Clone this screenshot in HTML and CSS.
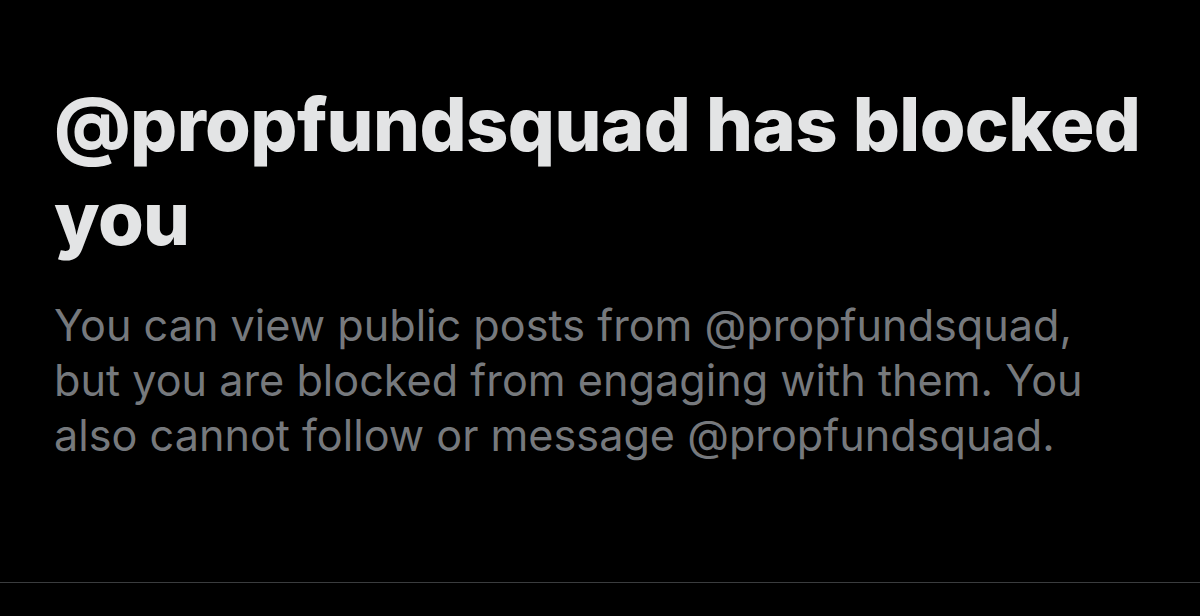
FILE: index.html
```html
<!DOCTYPE html>
<html lang="en">
<head>
    <meta charset="UTF-8">
    <meta name="viewport" content="width=device-width, initial-scale=1.0">
    <title>Blocked</title>
    <link rel="stylesheet" href="styles.css">
</head>
<body>
    <div class="blocked">
        <h1>@propfundsquad has blocked you</h1>
        <p>You can view public posts from @propfundsquad, but you are blocked from engaging with them. You also cannot follow or message @propfundsquad.</p>
    </div>
    <div class="divider"></div>
</body>
</html>
```

FILE: styles.css
```css
body {
    margin: 0;
    background-color: #000;
    font-family: Inter, "Noto Sans", sans-serif;
}
.blocked {
    padding: 77px 50px 0 54px;
    height: 505px;
    box-sizing: border-box;
}
h1 {
    margin: 0;
    font-size: 74px;
    line-height: 94px;
    font-weight: 800;
    color: #e3e4e5;
    letter-spacing: -0.6px;
}
p {
    margin: 33px 0 0;
    font-size: 43.2px;
    line-height: 55px;
    font-weight: 400;
    color: #76797d;
}
.divider {
    height: 1px;
    background-color: #3a3c3e;
    margin-top: 77px;
}
```
